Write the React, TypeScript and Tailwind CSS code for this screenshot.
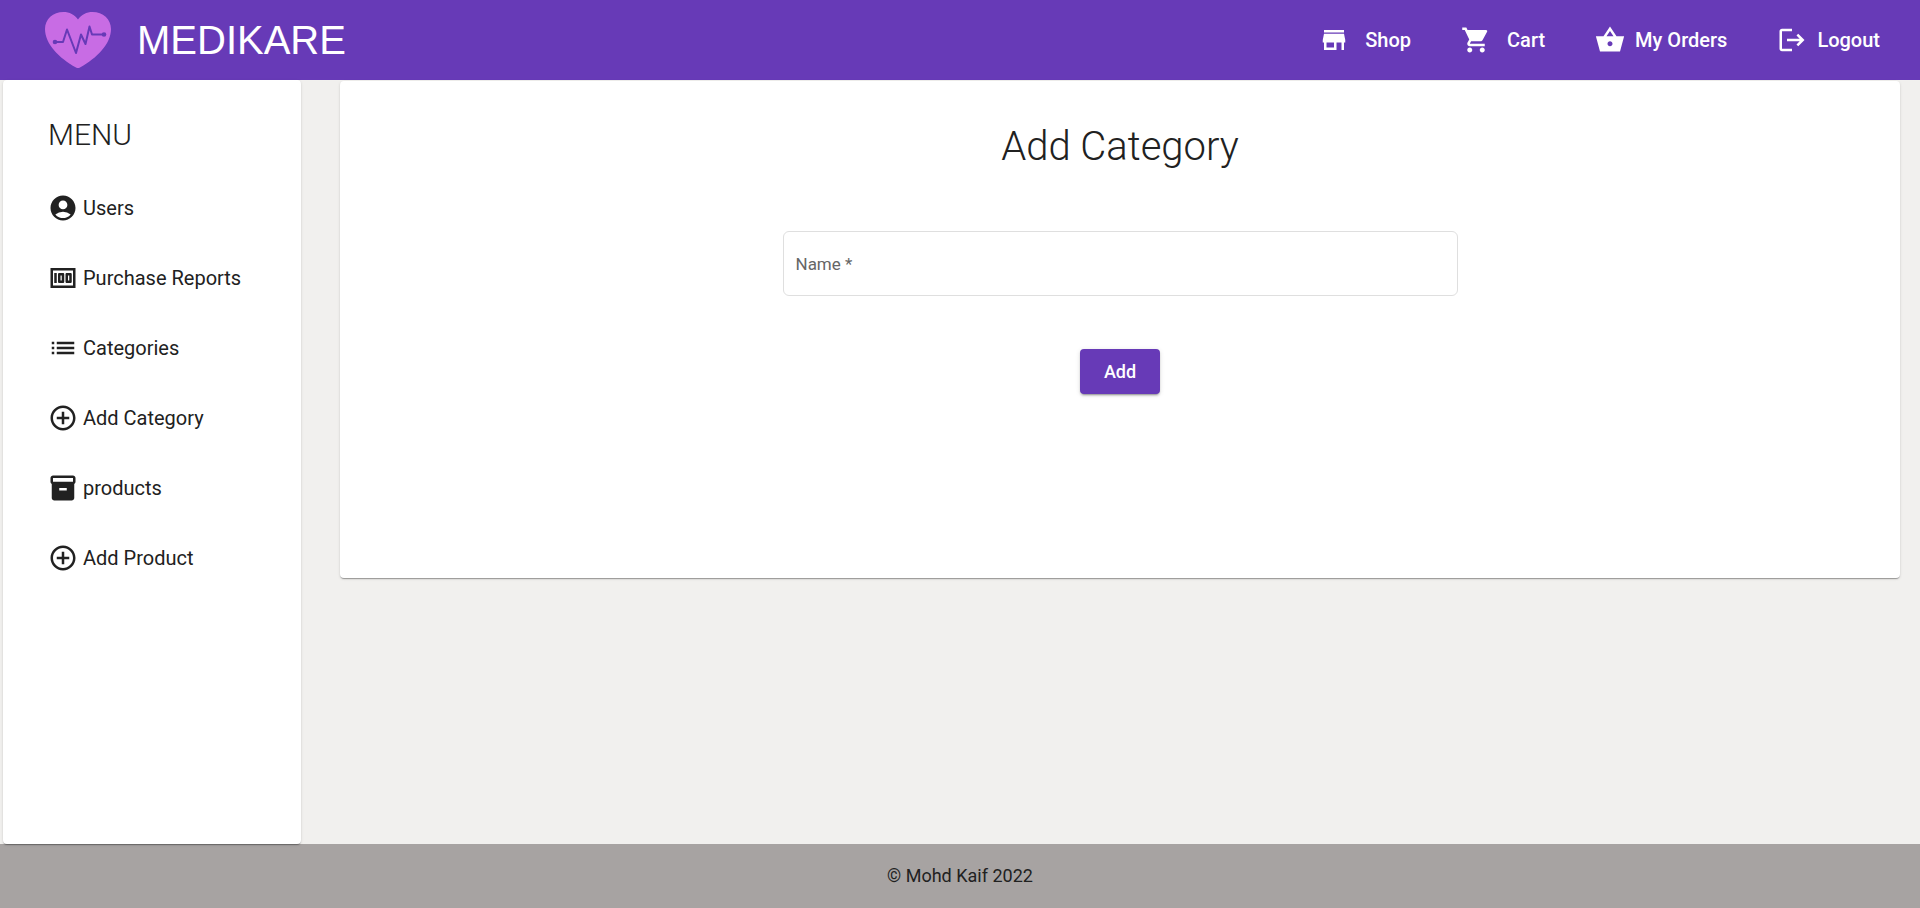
import type { ReactNode } from "react";
import {
  MdStore,
  MdShoppingCart,
  MdLogout,
  MdAccountCircle,
  MdList,
  MdAddCircleOutline,
} from "react-icons/md";

const PAPER =
  "rounded bg-white shadow-[0_2px_1px_-1px_rgba(0,0,0,0.2),0_1px_1px_0_rgba(0,0,0,0.14),0_1px_3px_0_rgba(0,0,0,0.12)]";

function Logo() {
  return (
    <svg viewBox="0 0 66 56" className="h-14 w-[66px]" aria-hidden="true">
      <path
        d="M33 7.5C29.500 2.500 24.500 0 18.500 0C8 0 0 7 0 17C0 32 14 46 31 55.500Q33 56.500 35 55.500C52 46 66 32 66 17C66 7 58 0 47.500 0C41.500 0 36.500 2.500 33 7.500Z"
        fill="#c86ce4"
      />
      <path
        d="M10 30H18L22 17.500L31 41L36 22.500L40.500 32L44.500 14.500L47 22.500H58"
        fill="none"
        stroke="#673ab7"
        strokeWidth="2"
        strokeLinejoin="round"
      />
      <circle cx="10" cy="30" r="2.300" fill="#673ab7" />
      <circle cx="59" cy="22.500" r="2.300" fill="#673ab7" />
    </svg>
  );
}

function BasketIcon() {
  return (
    <svg viewBox="0 0 24 24" className="size-[30px]" fill="currentColor" aria-hidden="true">
      <path d="M17.210 9L12 1.200L6.790 9H.7l3.300 12.200h16l3.300-12.200h-6.090zM9.200 9L12 4.800L14.800 9H9.200zM12 17c-1.100 0-2-.9-2-2s.9-2 2-2 2 .9 2 2-.9 2-2 2z" />
    </svg>
  );
}

function BanknoteIcon() {
  return (
    <svg viewBox="0 0 24 24" className="size-[30px]" fill="currentColor" aria-hidden="true">
      <path d="M5 8h2v8H5zm7 0H9c-.55 0-1 .45-1 1v6c0 .55.45 1 1 1h3c.55 0 1-.45 1-1V9c0-.55-.45-1-1-1zm-1 6h-1v-4h1v4zm7-6h-3c-.55 0-1 .45-1 1v6c0 .55.45 1 1 1h3c.55 0 1-.45 1-1V9c0-.55-.45-1-1-1zm-1 6h-1v-4h1v4z" />
      <path d="M2 4v16h20V4H2zm2 14V6h16v12H4z" />
    </svg>
  );
}

function BoxIcon() {
  return (
    <svg viewBox="0 0 24 24" className="size-[30px]" fill="currentColor" aria-hidden="true">
      <path d="M20 2H4c-1 0-2 .9-2 2v3.010c0 .72.43 1.340 1 1.690V20c0 1.100 1.100 2 2 2h14c.9 0 2-.9 2-2V8.700c.57-.35 1-.97 1-1.690V4c0-1.100-1-2-2-2zm-5 12H9v-2h6v2zm5-7H4V4h16v3z" />
    </svg>
  );
}

function NavLink({ icon, label, gap }: { icon: ReactNode; label: string; gap: string }) {
  return (
    <a href="#" className={`flex items-center ${gap}`}>
      {icon}
      <span>{label}</span>
    </a>
  );
}

const menu = [
  { label: "Users", icon: <MdAccountCircle size={30} /> },
  { label: "Purchase Reports", icon: <BanknoteIcon /> },
  { label: "Categories", icon: <MdList size={30} /> },
  { label: "Add Category", icon: <MdAddCircleOutline size={30} /> },
  { label: "products", icon: <BoxIcon /> },
  { label: "Add Product", icon: <MdAddCircleOutline size={30} /> },
];

export default function App() {
  return (
    <div className="flex min-h-screen flex-col bg-[#f1f0ee] font-['Roboto',sans-serif] text-[#212121]">
      <header className="flex h-20 items-center justify-between bg-[#673ab7] pr-10 pl-[45px] text-white">
        <a href="#" className="flex items-center gap-[26px]">
          <Logo />
          <span className="font-['Liberation_Sans',sans-serif] text-[40px] leading-none">MEDIKARE</span>
        </a>
        <nav className="flex items-center gap-[50px] text-xl font-medium">
          <NavLink icon={<MdStore size={30} />} label="Shop" gap="gap-4" />
          <NavLink icon={<MdShoppingCart size={30} />} label="Cart" gap="gap-4" />
          <NavLink icon={<BasketIcon />} label="My Orders" gap="gap-2.5" />
          <NavLink icon={<MdLogout size={30} />} label="Logout" gap="gap-2.5" />
        </nav>
      </header>

      <div className="flex grow items-stretch pr-5 pl-[3px]">
        <aside className={`z-10 w-[298px] shrink-0 px-[45px] pt-8 ${PAPER}`}>
          <h2 className="text-[30px] leading-[46px] font-light">MENU</h2>
          <ul className="mt-[35px]">
            {menu.map((item) => (
              <li key={item.label} className="h-[70px]">
                <a href="#" className="flex items-center gap-[5px] text-xl whitespace-nowrap">
                  {item.icon}
                  <span>{item.label}</span>
                </a>
              </li>
            ))}
          </ul>
        </aside>
        <main className="grow pt-px pl-[39px]">
          <section className={`flex flex-col items-center pt-9 pb-[184px] ${PAPER}`}>
            <h1 className="text-[40px] leading-[60px] font-light">Add Category</h1>
            <form className="mt-[54px] flex w-full flex-col items-center" onSubmit={(e) => e.preventDefault()}>
              <input
                type="text"
                aria-label="Name"
                placeholder="Name *"
                required
                className="h-[65px] w-[675px] max-w-full rounded-md border border-[#dfdfdf] px-3 text-[17px] shadow-none outline-none placeholder:text-[#666666]"
              />
              <button
                type="submit"
                className="mt-[53px] h-[45px] w-20 rounded bg-[#673ab7] text-lg font-medium text-white shadow-[0_3px_1px_-2px_rgba(0,0,0,0.2),0_2px_2px_0_rgba(0,0,0,0.14),0_1px_5px_0_rgba(0,0,0,0.12)]"
              >
                Add
              </button>
            </form>
          </section>
        </main>
      </div>

      <footer className="flex h-16 items-center justify-center bg-[#a7a3a2] text-lg">
        <p>© Mohd Kaif 2022</p>
      </footer>
    </div>
  );
}
